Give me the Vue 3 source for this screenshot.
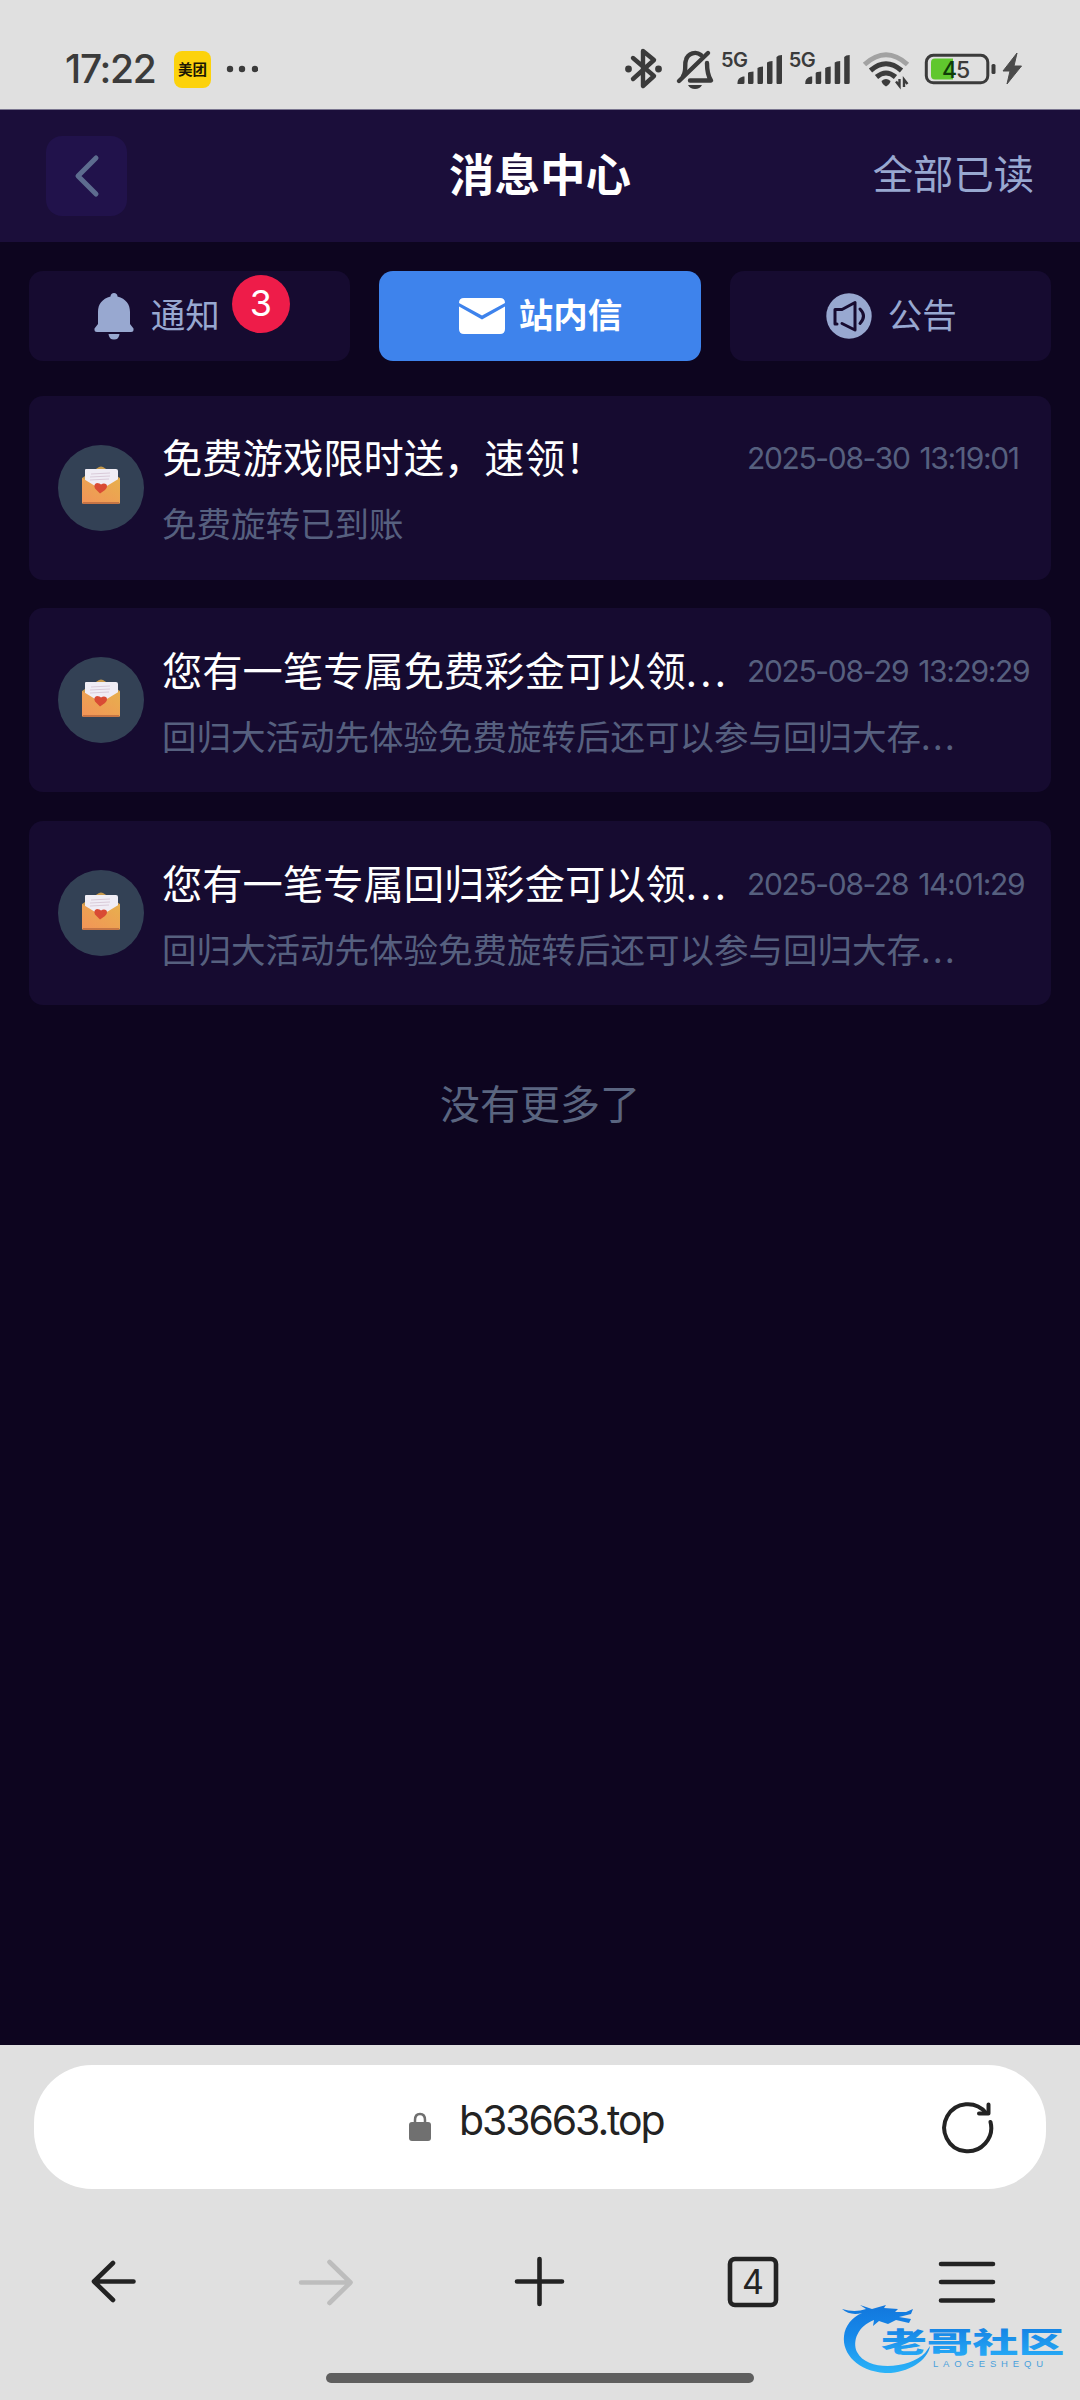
<script setup>
const messages = [
  { title: '免费游戏限时送，速领！', body: '免费旋转已到账', time: ['2025-08-30', '13:19:01'] },
  { title: '您有一笔专属免费彩金可以领', body: '回归大活动先体验免费旋转后还可以参与回归大存', more: true, time: ['2025-08-29', '13:29:29'] },
  { title: '您有一笔专属回归彩金可以领', body: '回归大活动先体验免费旋转后还可以参与回归大存', more: true, time: ['2025-08-28', '14:01:29'] },
]
</script>

<template>
  <div class="screen">
    <div class="status">
      <span class="clock">17:22</span>
      <span class="app-badge">美团</span>
      <svg class="dots" width="32" height="10" viewBox="0 0 32 10" fill="#3b3b3b"><circle cx="4" cy="5" r="3.2" /><circle cx="16" cy="5" r="3.2" /><circle cx="29" cy="5" r="3.2" /></svg>
      <svg class="sys" width="400" height="50" viewBox="622 44 400 50" fill="none">
        <g stroke="#3b3b3b" stroke-width="4.4" stroke-linecap="round" stroke-linejoin="round">
          <path d="M633 58L654 76L643 86V51L654 60L633 79" />
          <path d="M683 76C687 71 684 64 686 60C688 53 696 51 701 55" />
          <path d="M679 81L708 53" />
          <path d="M707 63C707 72 708 76 711 80.500H690" />
        </g>
        <g fill="#3b3b3b"><circle cx="628.500" cy="69" r="3.400" /><circle cx="658.500" cy="69" r="3.400" /><path d="M688 85H702Q700 89 695 89T688 85Z" /></g>
        <g v-for="o in [0, 67.700]" :key="o" fill="#3b3b3b" :transform="`translate(${o} 0)`">
          <text x="721" y="66.500" class="net">5G</text>
          <path d="M737.500 84Q737 78 743 76.500H744.500V82.500Q744.500 84 743 84ZM748 83V73Q749 71.500 753.500 71.500V82.500Q753.500 84 752 84H749Q748 84 748 83ZM757.500 83V68Q759 66.500 763 66.500V82.500Q763 84 761.500 84H758.500Q757.500 84 757.500 83ZM767 83V62.500Q768.500 61 772.500 61V82.500Q772.500 84 771 84H768Q767 84 767 83ZM776.500 83V57Q778 55 782 55V82.500Q782 84 780.500 84H777.500Q776.500 84 776.500 83Z" />
        </g>
        <g stroke-width="5">
          <path d="M864.500 64.500Q886 45 907.500 64.500" stroke="#a2a2a2" />
          <path d="M870.500 70.500Q886 57 901.500 70.500" stroke="#3b3b3b" />
          <path d="M876.500 77Q886 69 895.500 77" stroke="#3b3b3b" />
        </g>
        <path d="M881.500 81Q886 77 890.500 81Q890 84 886 86.500Q882 84 881.500 81Z" fill="#3b3b3b" />
        <path d="M899.500 79V86L896 81.500M904 87V79.500L907.500 84" stroke="#3b3b3b" stroke-width="2.400" />
        <rect x="926.300" y="55.300" width="61.500" height="27.500" rx="7" stroke="#3b3b3b" stroke-width="3" />
        <path d="M935 58.500H953V79.500H935Q931 79.500 931 75.500V62.500Q931 58.500 935 58.500Z" fill="#60c72e" />
        <rect x="991.500" y="64" width="4" height="10" rx="1.500" fill="#3b3b3b" />
        <text x="942" y="77.500" class="batt"><tspan fill="#103c08">4</tspan><tspan fill="#3b3b3b">5</tspan></text>
        <path d="M1017 53L1003 71H1010L1007 84L1021.500 66H1014Z" fill="#4b4b4b" stroke="#4b4b4b" />
      </svg>
    </div>

    <header class="header">
      <button class="back">
        <svg width="28" height="46" viewBox="0 0 28 46" fill="none" stroke="#5d6c8f" stroke-width="5" stroke-linecap="round" stroke-linejoin="round"><path d="M23 5L5 23L23 41" /></svg>
      </button>
      <h1>消息中心</h1>
      <span class="read-all">全部已读</span>
    </header>

    <nav class="tabs">
      <div class="tab first">
        <svg width="40" height="48" viewBox="0 0 40 48" fill="#98a8d0"><path d="M20 1C22 1 23.500 2.500 23.500 4.500C32 7 36 12 36 20V32L39.500 36.500Q40 40 37 40H3Q0 40 .5 36.500L4 32V20C4 12 8 7 16.500 4.500C16.500 2.500 18 1 20 1ZM14.500 42H25.500Q25 47.500 20 47.500T14.500 42Z" /></svg>
        <span class="label">通知</span><span class="badge">3</span>
      </div>
      <div class="tab active">
        <svg width="46" height="36" viewBox="0 0 46 36" fill="#fff"><path d="M5 0H41Q46 0 46 5L23 17.500L0 5Q0 0 5 0ZM0 8.500L23 21.500L46 8.500V31Q46 36 41 36H5Q0 36 0 31Z" /></svg>
        <span class="label">站内信</span>
      </div>
      <div class="tab">
        <svg width="46" height="46" viewBox="0 0 46 46" fill="none"><circle cx="23" cy="23" r="22.700" fill="#98a8d0" /><g stroke="#170b30" stroke-width="3" stroke-linecap="round" stroke-linejoin="round"><path d="M11 31H9V16.500H16L29 9.500V37L16 30.500" /><path d="M34 16Q41 23 34 30.500" /></g></svg>
        <span class="label">公告</span>
      </div>
    </nav>

    <main class="list">
      <article v-for="m in messages" :key="m.time[0]" class="card">
        <div class="avatar">
          <svg width="42" height="40" viewBox="0 0 42 40">
            <defs><linearGradient id="env" x1="0" y1="1" x2="1" y2="0"><stop offset="0" stop-color="#f39358" /><stop offset="1" stop-color="#e7b04d" /></linearGradient></defs>
            <path d="M2 12L19 1Q21 0 23 1L40 12V36Q40 38 38 38H4Q2 38 2 36Z" fill="#c89a4c" />
            <path d="M5 4Q5 3 6 3H36Q38 3 38 5V26H5Z" fill="#f0edf5" />
            <path d="M11 8L30 7M10 11L30 10M10 14L29 13" stroke="#dacbd9" stroke-width="1" />
            <path d="M2 12L16 20.500Q21 24 26 20.500L40 12V36Q40 38 38 38H4Q2 38 2 36Z" fill="url(#env)" />
            <path d="M3 37H39" stroke="#b96840" stroke-width="1.500" />
            <path d="M20 27.500L15 22.500Q13 18 17 17Q20 17 21 18.500Q24 16.500 26.500 18.500Q28 21 25 24Z" fill="#d94b34" />
          </svg>
        </div>
        <div class="content">
          <div class="line"><h2>{{ m.title }}<span v-if="m.more" class="more">...</span></h2><time><span>{{ m.time[0] }}</span><span>{{ m.time[1] }}</span></time></div>
          <p>{{ m.body }}<span v-if="m.more" class="more">...</span></p>
        </div>
      </article>
      <div class="end">没有更多了</div>
    </main>

    <footer class="browser">
      <div class="address">
        <svg class="lock" width="22" height="30" viewBox="0 0 22 30"><path d="M6 12V8Q6 2 11 2T16 8V12" fill="none" stroke="#707070" stroke-width="2.500" /><rect y="10" width="22" height="19" rx="3" fill="#707070" /></svg>
        <span class="url">b33663.top</span>
        <svg class="reload" width="54" height="54" viewBox="0 0 54 54" fill="none" stroke="#232323" stroke-width="4" stroke-linecap="round" stroke-linejoin="round"><path d="M50.500 22A23.500 23.500 0 1 1 46 13" /><path d="M48.500 4.500V13.500H39" /></svg>
      </div>
      <div class="tools">
        <svg width="60" height="60" viewBox="0 0 60 60"><path d="M50.500 29.500H11M30 11L11 29.500L30 48" /></svg>
        <svg class="off" width="60" height="60" viewBox="0 0 60 60"><path d="M5 30.500H54M33.500 10L54.500 30.500L33.500 51" /></svg>
        <svg width="60" height="60" viewBox="0 0 60 60"><path d="M29.500 7V52M7 29.500H52" /></svg>
        <svg width="60" height="60" viewBox="0 0 60 60"><rect x="7" y="7" width="46" height="46" rx="5" /><text x="30" y="41.500" text-anchor="middle">4</text></svg>
        <svg width="60" height="60" viewBox="0 0 60 60"><path d="M5 12H57M5 30H57M5 48.500H57" /></svg>
      </div>
      <div class="home-bar"></div>
    </footer>

    <svg class="watermark" width="226" height="74" viewBox="840 2302 226 74">
      <defs><linearGradient id="wm" gradientUnits="userSpaceOnUse" x1="0" y1="2305" x2="0" y2="2372"><stop offset="0" stop-color="#1277dc" /><stop offset=".45" stop-color="#1688ea" /><stop offset="1" stop-color="#2bb3f8" /></linearGradient>
        <linearGradient id="wt" x1="0" y1="0" x2="0" y2="1"><stop offset=".1" stop-color="#137ee2" /><stop offset=".9" stop-color="#26aaf6" /></linearGradient></defs>
      <path d="M842 2309Q855 2313 866 2309L860 2305L872 2309L886 2305L884 2308L898 2309L895 2312L906 2312L913 2309L911 2314L899 2317L911 2319L909 2323L896 2320L888 2324L879 2321L873 2326L874 2320C858 2326 852 2341 857 2352C868 2373 911 2368 925 2353L930 2346C928 2361 906 2374 885 2373C858 2371 842 2354 844 2336C845 2326 852 2317 862 2313Q850 2316 842 2309Z" fill="url(#wm)" />
      <text class="brand" transform="translate(881 2353) scale(1.580 1)" fill="url(#wt)">老哥社区</text>
      <text x="933" y="2366.500" class="pinyin" textLength="110">LAOGESHEQU</text>
    </svg>
  </div>
</template>

<style>
body { margin: 0; background: #0d051f; }
</style>

<style scoped>
* { box-sizing: border-box; }
.screen { position: relative; width: 1080px; height: 2400px; display: flex; flex-direction: column; overflow: hidden; background: #0d051f; font-family: Inter, "Noto Sans CJK SC", sans-serif; }
.status { height: 110px; flex: none; display: flex; align-items: center; padding: 29px 58px 0 65px; background: #e0e0e0; border-bottom: 1px solid #7b7690; }
.clock { width: 109px; font-size: 39px; font-weight: 500; letter-spacing: -1.300px; color: #3b3b3b; line-height: 50px; }
.app-badge { width: 37px; height: 37px; border-radius: 8px; background: #fcd20c; color: #1b1704; font: 700 14.500px/35px "Noto Sans CJK SC", sans-serif; text-align: center; }
.dots { margin-left: 15px; }
.sys { margin-left: auto; }
.net { font: 600 20px Inter, sans-serif; letter-spacing: -.500px; }
.batt { font: 500 23px Inter, sans-serif; letter-spacing: -1px; }

.header { height: 132px; flex: none; display: grid; grid-template-columns: 1fr auto 1fr; align-items: center; padding: 0 46px; background: #1b0e3a; }
.back { width: 81px; height: 80px; padding: 0; border: 0; border-radius: 16px; background: #21124b; display: flex; align-items: center; justify-content: center; }
h1 { margin: 0 0 8px; font-size: 45.500px; line-height: 60px; font-weight: 700; color: #fff; font-family: "Noto Sans CJK SC", sans-serif; }
.read-all { justify-self: end; margin-bottom: 8px; font-size: 40.300px; line-height: 60px; color: #98a8d0; font-family: "Noto Sans CJK SC", sans-serif; }

.tabs { display: grid; grid-template-columns: repeat(3, minmax(0, 1fr)); gap: 29px; padding: 29px 28.500px 0; }
.tab { height: 90px; display: flex; align-items: center; justify-content: center; padding-left: 1px; border-radius: 14px; background: #160b30; color: #98a8d0; font-size: 34.500px; }
.tab svg { margin-right: 16px; flex: none; }
.tab.first { padding-left: 5px; }
.tab.first svg { margin-right: 17px; }
.tab.active { background: #3e83ec; color: #fff; font-weight: 700; }
.tab.active svg { margin-right: 14px; }
.label { margin-bottom: 6px; line-height: 50px; font-family: "Noto Sans CJK SC", sans-serif; }
.badge { width: 58px; height: 58px; margin: 0 0 24px 12px; border-radius: 50%; background: #ee1c49; color: #fff; font-size: 36px; line-height: 57px; text-align: center; }

.list { flex: 1; display: flex; flex-direction: column; gap: 28.800px; padding: 34.500px 29px 0; }
.card { height: 184px; flex: none; display: flex; align-items: center; padding: 0 18px 0 29px; border-radius: 14px; background: #160b30; }
.avatar { width: 86px; height: 86px; flex: none; display: flex; align-items: center; justify-content: center; border-radius: 50%; background: #334155; }
.avatar svg { margin-top: -3px; }
.content { flex: 1; min-width: 0; margin-left: 18px; padding-top: 3px; }
.line { display: flex; align-items: center; height: 66px; }
h2, p { margin: 0; white-space: nowrap; font-weight: 400; font-family: "Noto Sans CJK SC", sans-serif; }
h2 { width: 563px; margin-right: 22px; font-size: 40.300px; line-height: 60px; color: #fff; }
h2 .more { letter-spacing: 3.300px; }
p .more { letter-spacing: 2.400px; }
time { display: flex; gap: 10px; margin-top: 4px; font-size: 30px; letter-spacing: -1.350px; line-height: 40px; color: #56607f; white-space: nowrap; }
p { font-size: 34.500px; line-height: 66px; color: #56607f; }
.end { margin-top: 33px; text-align: center; font-size: 40px; line-height: 70px; color: #5a6580; font-family: "Noto Sans CJK SC", sans-serif; }

.browser { height: 355px; flex: none; padding-top: 20px; background: #e0e0e0; display: flex; flex-direction: column; align-items: center; }
.address { width: 1012px; height: 124px; flex: none; display: flex; align-items: center; padding: 0 52px 0 375px; border-radius: 58px; background: #fff; }
.url { margin: -15px 0 0 28px; font-size: 41px; letter-spacing: -2.100px; color: #232323; }
.reload { margin: -1px 0 0 auto; }
.tools { width: 100%; display: flex; justify-content: space-between; padding: 63px 84px 0 83px; }
.tools svg { fill: none; stroke: #232323; stroke-width: 4.600; stroke-linecap: round; stroke-linejoin: round; }
.tools .off { stroke: #bdbdbd; }
.tools text { font-size: 34px; fill: #232323; stroke: none; }
.home-bar { width: 428px; height: 10px; margin-top: 61px; border-radius: 5px; background: #5f5f5f; }
.watermark { position: absolute; left: 840px; top: 2302px; }
.brand { font: 900 29px "Noto Sans CJK SC", sans-serif; }
.pinyin { font: 9.500px "Liberation Sans", sans-serif; fill: #4aa0dc; }
</style>
